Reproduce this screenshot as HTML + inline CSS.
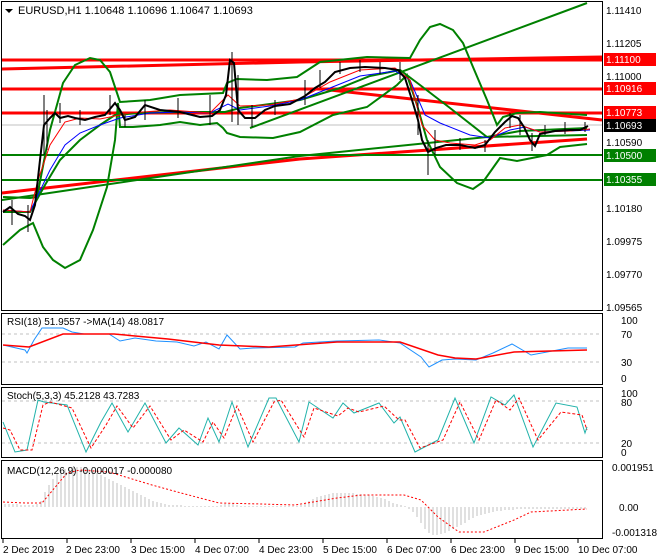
<!DOCTYPE html>
<html><head><meta charset="utf-8"><style>
html,body{margin:0;padding:0;background:#fff;}
svg{display:block;font-family:"Liberation Sans",sans-serif;font-size:10px;}
</style></head><body>
<svg width="660" height="560" viewBox="0 0 660 560" xmlns="http://www.w3.org/2000/svg">
<rect width="660" height="560" fill="#fff"/>
<g fill="none" stroke="#000" stroke-width="1">
<rect x="1.5" y="1.5" width="601" height="309"/>
<rect x="1.5" y="313.5" width="601" height="71"/>
<rect x="1.5" y="387.5" width="601" height="70"/>
<rect x="1.5" y="460.5" width="601" height="78"/>
</g>
<line x1="2" y1="125" x2="602" y2="125" stroke="#c0c0c0"/>
<g stroke="#f00" stroke-width="3" fill="none">
<line x1="2" y1="60" x2="602" y2="60"/>
<line x1="2" y1="89" x2="602" y2="89"/>
<line x1="2" y1="113" x2="602" y2="113"/>
<polyline points="2,69 300,62 602,57"/>
<line x1="330" y1="90" x2="602" y2="120"/>
<polyline points="2,193 300,159 587,139"/>
</g>
<g stroke="#008000" stroke-width="2" fill="none">
<line x1="2" y1="155" x2="602" y2="155"/>
<line x1="2" y1="180" x2="602" y2="180"/>
<line x1="250" y1="128" x2="587" y2="3"/>
<polyline points="2,200 300,156 487,137 587,135"/>
<polyline points="3,197 30,198 37,197 50,130 63,83 75,65 90,58 100,60 110,72 117,93 120,102 150,100 180,95 223,93 227,83 237,79 267,80 297,77 320,62 367,57 410,58 420,40 430,27 440,24 453,30 463,43 473,67 487,100 497,125 503,117 517,113 540,112 587,115"/>
<polyline points="3,245 20,230 33,223 43,247 53,260 65,268 80,260 93,230 107,187 115,140 118,103 120,127 133,127 160,125 180,122 200,125 217,123 223,128 227,133 240,137 273,138 300,132 333,115 367,107 397,85 407,75 417,105 427,140 440,167 457,183 473,189 483,182 500,158 517,161 547,155 560,147 587,144"/>
<polyline points="3,212 30,212 45,185 60,160 80,140 100,125 115,115 140,113 180,112 225,112 240,108 300,100 340,88 370,76 400,70 420,85 450,108 487,137 520,131 587,128"/>
</g>
<polyline fill="none" stroke="#00f" stroke-width="1" points="3,210 30,212 38,195 50,170 65,145 80,133 100,125 120,118 150,113 180,112 210,113 228,104 240,110 270,106 300,100 330,88 360,76 395,71 410,80 425,115 440,123 470,135 490,138 510,130 525,127 540,132 570,131 590,130"/>
<polyline fill="none" stroke="#f00" stroke-width="1" points="3,210 30,212 38,180 50,145 65,122 80,118 100,119 130,113 170,110 210,113 228,95 240,106 270,105 300,99 330,82 360,70 395,68 410,80 422,125 435,140 450,143 475,145 490,140 505,128 520,125 540,132 570,131 590,129"/>
<g stroke="#000" stroke-width="1">
<path d="M12,200v25M28,205v27M44,95v60M47,110v40M60,103v20M80,110v15M110,95v20M125,115v12M145,100v20M178,98v20M210,95v30M232,52v70M238,75v50M252,105v22M275,100v15M305,80v25M320,70v18M340,62v12M360,60v12M380,62v12M400,62v18M418,95v40M428,140v35M435,130v25M460,138v12M485,140v12M510,113v15M520,115v20M532,133v18M545,125v10M565,122v12M585,122v10"/>
</g>
<polyline fill="none" stroke="#000" stroke-width="2" points="3,212 10,207 18,214 25,216 30,220 35,205 40,160 44,125 50,118 55,113 60,118 68,116 75,118 85,120 95,117 105,115 115,103 120,110 125,120 135,117 145,105 160,110 180,112 200,117 212,116 220,110 226,95 230,60 234,63 238,110 245,118 255,118 265,110 275,106 290,104 305,96 315,88 325,82 335,72 350,68 365,67 385,68 398,70 405,78 412,100 418,120 422,140 428,152 436,148 446,145 460,145 475,148 485,145 495,132 505,122 512,116 518,118 524,127 530,140 535,146 540,134 555,131 570,130 580,130 588,126"/>
<g fill="#000">
<text x="606" y="14">1.11410</text>
<text x="606" y="47">1.11205</text>
<text x="606" y="80">1.11000</text>
<text x="606" y="146">1.10590</text>
<text x="606" y="212">1.10180</text>
<text x="606" y="245">1.09975</text>
<text x="606" y="278">1.09770</text>
<text x="606" y="311">1.09565</text>
</g>
<rect x="604" y="53" width="52" height="13" fill="#f00"/><text x="606" y="63" fill="#fff">1.11100</text>
<rect x="604" y="82" width="52" height="13" fill="#f00"/><text x="606" y="92" fill="#fff">1.10916</text>
<rect x="604" y="106" width="52" height="13" fill="#f00"/><text x="606" y="116" fill="#fff">1.10773</text>
<rect x="604" y="119" width="52" height="13" fill="#000"/><text x="606" y="129" fill="#fff">1.10693</text>
<rect x="604" y="149" width="52" height="13" fill="#008000"/><text x="606" y="159" fill="#fff">1.10500</text>
<rect x="604" y="173" width="52" height="13" fill="#008000"/><text x="606" y="183" fill="#fff">1.10355</text>
<path d="M5,9 h8 l-4,4z" fill="#000"/>
<text x="18" y="14" font-size="11">EURUSD,H1  1.10648 1.10696 1.10647 1.10693</text>
<g stroke="#c0c0c0" stroke-dasharray="3,3"><line x1="2" y1="334" x2="602" y2="334"/><line x1="2" y1="362" x2="602" y2="362"/></g>
<polyline fill="none" stroke="#1e90ff" points="3,345 25,350 27,353 34,340 42,328 63,328 72,332 84,334 109,334 120,341 135,338 156,341 177,342 194,346 206,342 219,349 227,335 240,349 253,348 295,347 303,343 337,341 379,340 400,343 421,357 429,367 442,360 455,359 476,360 493,353 512,344 531,355 547,352 568,348 587,348"/>
<polyline fill="none" stroke="#f00" stroke-width="1.5" points="3,345 29,347 63,334 114,334 168,339 219,345 269,347 337,342 400,342 438,355 455,358 476,359 514,352 587,350"/>
<text x="7" y="325">RSI(18) 51.9557  -&gt;MA(14) 48.0817</text>
<text x="621" y="324">100</text><text x="621" y="338">70</text><text x="621" y="366">30</text><text x="621" y="382">0</text>
<g stroke="#c0c0c0" stroke-dasharray="3,3"><line x1="2" y1="401" x2="602" y2="401"/><line x1="2" y1="443" x2="602" y2="443"/></g>
<polyline fill="none" stroke="#20b2aa" points="3,422 15,452 27,450 38,400 44,402 67,405 86,452 101,422 112,403 128,432 145,403 166,443 179,428 198,445 208,418 219,442 232,402 248,447 269,398 276,398 299,442 309,402 333,418 343,403 354,413 379,403 394,423 400,417 415,452 438,440 455,398 474,443 491,397 505,405 514,395 533,447 556,403 577,407 585,433 587,427"/>
<polyline fill="none" stroke="#f00" stroke-dasharray="3,2" points="3,428 10,430 20,450 32,450 43,405 50,402 72,408 91,448 106,425 117,406 133,428 150,406 171,440 184,430 203,442 213,422 224,438 237,406 253,442 274,402 281,400 304,437 314,408 338,416 348,408 359,412 384,406 399,420 405,420 420,448 443,440 460,402 479,440 496,400 510,410 519,398 538,440 561,412 582,415 587,430"/>
<text x="7" y="399">Stoch(5,3,3) 45.2128 43.7283</text>
<text x="621" y="397">100</text><text x="621" y="406">80</text><text x="621" y="447">20</text><text x="621" y="456">0</text>
<path stroke="#c0c0c0" stroke-width="1" fill="none" d="M5,507v-3M9,507v-3M13,507v-3M17,507v-3M21,507v-2M25,507v-2M29,507v-2M33,507v-2M37,507v-3M41,507v-6M45,507v-15M49,507v-22M53,507v-28M57,507v-33M61,507v-36M65,507v-38M69,507v-40M73,507v-40M77,507v-40M81,507v-40M85,507v-39M89,507v-38M93,507v-36M97,507v-34M101,507v-32M105,507v-30M109,507v-28M113,507v-26M117,507v-24M121,507v-22M125,507v-20M129,507v-18M133,507v-16M137,507v-14M141,507v-12M145,507v-10M149,507v-8M153,507v-6M157,507v-5M161,507v-4M165,507v-3M169,507v-2M173,507v-2M177,507v-2M181,507v-2M185,507v-1M189,507v-1M193,507v-1M197,507v-1M201,507v-1M205,507v-1M209,507v-1M213,507v-1M217,507v-1M221,507v-2M225,507v-3M229,507v-3M233,507v-3M237,507v-2M241,507v-1M245,507v-1M249,507v-1M253,507v-1M257,507v-1M261,507v-1M265,507v-1M269,507v-1M273,507v-1M277,507v-1M281,507v-1M285,507v-1M289,507v-1M293,507v-1M297,507v-1M301,507v-2M305,507v-4M309,507v-6M313,507v-8M317,507v-10M321,507v-11M325,507v-12M329,507v-13M333,507v-14M337,507v-14M341,507v-14M345,507v-14M349,507v-14M353,507v-14M357,507v-13M361,507v-13M365,507v-12M369,507v-12M373,507v-11M377,507v-10M381,507v-9M385,507v-8M389,507v-6M393,507v-4M397,507v-3M401,507v-2M405,507v-1M409,507v2M413,507v5M417,507v10M421,507v16M425,507v22M429,507v26M433,507v28M437,507v28M441,507v27M445,507v26M449,507v24M453,507v22M457,507v20M461,507v18M465,507v16M469,507v13M473,507v11M477,507v9M481,507v8M485,507v7M489,507v6M493,507v5M497,507v4M501,507v4M505,507v3M509,507v3M513,507v3M517,507v2M521,507v2M525,507v2M529,507v2M533,507v2M537,507v2M541,507v2M545,507v2M549,507v2M553,507v2M557,507v2M561,507v2M565,507v2M569,507v2M573,507v2M577,507v2M581,507v2M585,507v2"/>
<polyline fill="none" stroke="#f00" stroke-dasharray="2,2" points="3,502 25,503 42,503 67,473 80,470 109,472 152,485 181,493 219,503 261,504 295,505 337,498 362,495 404,495 421,500 438,517 459,532 484,532 514,520 531,512 587,509"/>
<text x="7" y="474">MACD(12,26,9) -0.000017 -0.000080</text>
<text x="612" y="471">0.001951</text><text x="619" y="511">0.00</text><text x="612" y="536">-0.001318</text>
<g stroke="#000"><path d="M3,539v4M67,539v4M131,539v4M195,539v4M259,539v4M323,539v4M387,539v4M451,539v4M515,539v4M578,539v4"/></g>
<g fill="#000">
<text x="3" y="553">2 Dec 2019</text><text x="66" y="553">2 Dec 23:00</text><text x="131" y="553">3 Dec 15:00</text><text x="195" y="553">4 Dec 07:00</text><text x="259" y="553">4 Dec 23:00</text><text x="323" y="553">5 Dec 15:00</text><text x="387" y="553">6 Dec 07:00</text><text x="451" y="553">6 Dec 23:00</text><text x="515" y="553">9 Dec 15:00</text><text x="578" y="553">10 Dec 07:00</text>
</g>
</svg>
</body></html>
